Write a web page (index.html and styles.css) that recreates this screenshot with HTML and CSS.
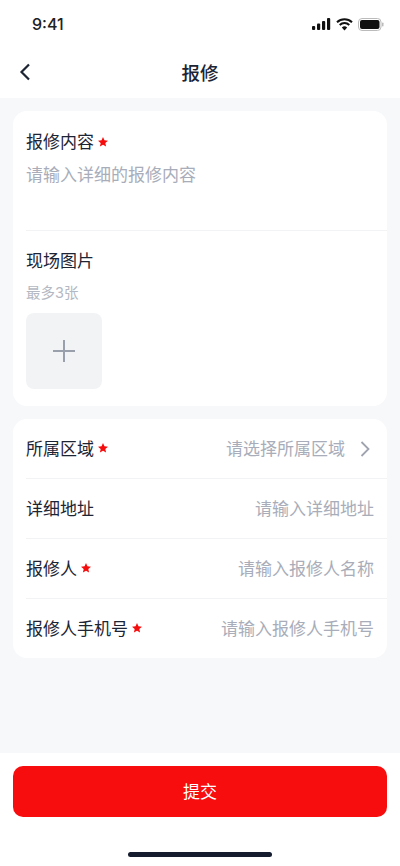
FILE: index.html
```html
<!DOCTYPE html>
<html lang="zh-CN">
<head>
    <meta charset="UTF-8">
    <meta name="viewport" content="width=device-width, initial-scale=1.0">
    <title>报修</title>
    <link rel="stylesheet" href="styles.css">
</head>
<body>
    <div class="page">
        <div class="status-bar">
            <span class="time">9:41</span>
            <div class="status-icons">
                <svg width="19" height="12" viewBox="0 0 19 12"><rect x="0" y="8" width="3.2" height="4" rx="1" /><rect x="5" y="5.6" width="3.2" height="6.4" rx="1" /><rect x="10" y="3" width="3.2" height="9" rx="1" /><rect x="15" y="0" width="3.2" height="12" rx="1" /></svg>
                <svg width="17" height="13" viewBox="0 0 17 13"><path d="M1 4.2a10.8 10.8 0 0 1 15 0" fill="none" stroke="#111" stroke-width="2" /><path d="M3.7 7a7 7 0 0 1 9.6 0" fill="none" stroke="#111" stroke-width="2" /><path d="M8.5 12.6 5.8 9.6a4 4 0 0 1 5.4 0z" /></svg>
                <svg width="26" height="13" viewBox="0 0 26 13"><rect x="0.5" y="0.5" width="22.5" height="12" rx="3.5" fill="none" stroke="#bbb" /><rect x="2" y="2" width="19.5" height="9" rx="2" /><rect x="24" y="4.5" width="1.5" height="4" rx="0.7" fill="#bbb" /></svg>
            </div>
        </div>

        <div class="nav-bar">
            <svg class="back" width="12" height="18" viewBox="0 0 12 18"><path d="M10 1.5 2.5 9l7.5 7.5" fill="none" stroke="#1d2433" stroke-width="2.2" /></svg>
            <h1 class="nav-title">报修</h1>
        </div>

        <div class="content">
            <div class="card">
                <div class="block block-text">
                    <div class="label">报修内容<svg class="star" width="10" height="10" viewBox="0 0 20 20"><path d="M10 0l2.9 6.600 7.100.7-5.400 4.800 1.600 7L10 15.400 3.800 19.100l1.600-7L0 7.300l7.100-.7z" /></svg></div>
                    <div class="placeholder textarea">请输入详细的报修内容</div>
                </div>
                <div class="block block-photo">
                    <div class="label">现场图片</div>
                    <div class="hint">最多3张</div>
                    <div class="upload">
                        <svg width="24" height="24" viewBox="0 0 24 24"><path d="M12 1v22M1 12h22" stroke="#9a9fac" stroke-width="2" /></svg>
                    </div>
                </div>
            </div>

            <div class="card">
                <div class="row">
                    <div class="label">所属区域<svg class="star" width="10" height="10" viewBox="0 0 20 20"><path d="M10 0l2.9 6.600 7.100.7-5.400 4.800 1.600 7L10 15.400 3.800 19.100l1.600-7L0 7.300l7.100-.7z" /></svg></div>
                    <div class="placeholder">请选择所属区域
                        <svg class="arrow" width="10" height="16" viewBox="0 0 10 16"><path d="M1.5 1 8.500 8l-7 7" fill="none" stroke="#9ea3af" stroke-width="1.8" /></svg>
                    </div>
                </div>
                <div class="row">
                    <div class="label">详细地址</div>
                    <div class="placeholder">请输入详细地址</div>
                </div>
                <div class="row">
                    <div class="label">报修人<svg class="star" width="10" height="10" viewBox="0 0 20 20"><path d="M10 0l2.9 6.600 7.100.7-5.400 4.800 1.600 7L10 15.400 3.800 19.100l1.600-7L0 7.300l7.100-.7z" /></svg></div>
                    <div class="placeholder">请输入报修人名称</div>
                </div>
                <div class="row">
                    <div class="label">报修人手机号<svg class="star" width="10" height="10" viewBox="0 0 20 20"><path d="M10 0l2.9 6.600 7.100.7-5.400 4.800 1.600 7L10 15.400 3.800 19.100l1.600-7L0 7.300l7.100-.7z" /></svg></div>
                    <div class="placeholder">请输入报修人手机号</div>
                </div>
            </div>
        </div>

        <div class="footer">
            <button class="submit">提交</button>
            <div class="home-bar"></div>
        </div>
    </div>
</body>
</html>
```

FILE: styles.css
```css
body {
    margin: 0;
    background: #f7f8fa;
    font-family: "Inter", "Noto Sans CJK SC", sans-serif;
    color: #1d2433;
}
.page {
    display: flex;
    flex-direction: column;
    height: 866px;
}
.status-bar {
    display: flex;
    justify-content: space-between;
    align-items: center;
    height: 48px;
    padding: 0 16px 0 32px;
    background: #fff;
}
.time {
    font-size: 16px;
    font-weight: 500;
    color: #222;
}
.status-icons {
    display: flex;
    align-items: center;
    gap: 5px;
}
.status-bar svg {
    fill: #111;
}
.nav-bar {
    display: flex;
    align-items: center;
    justify-content: center;
    position: relative;
    height: 50px;
    padding-bottom: 2px;
    box-sizing: border-box;
    background: #fff;
}
.back {
    position: absolute;
    left: 19px;
    top: 15px;
}
.nav-title {
    margin: 0;
    font-size: 18.5px;
    font-weight: 500;
}
.content {
    flex: 1;
    display: flex;
    flex-direction: column;
    gap: 13px;
    padding: 13px 13px 0;
}
.card {
    background: #fff;
    border-radius: 14px;
    padding-left: 13px;
}
.label {
    font-size: 17px;
    line-height: 24px;
    white-space: nowrap;
}
.star {
    margin-left: 4px;
    vertical-align: 1.500px;
    fill: #f50d0d;
}
.placeholder {
    display: flex;
    align-items: center;
    font-size: 17px;
    line-height: 24px;
    color: #a8adb9;
    white-space: nowrap;
}
.block-text {
    height: 120px;
    box-sizing: border-box;
    padding-top: 19px;
    border-bottom: 1px solid #f2f3f5;
}
.textarea {
    margin-top: 9px;
}
.block-photo {
    height: 175px;
    box-sizing: border-box;
    padding-top: 18px;
}
.hint {
    margin-top: 10px;
    font-size: 14.5px;
    line-height: 20px;
    color: #b4b8c2;
}
.upload {
    display: flex;
    align-items: center;
    justify-content: center;
    width: 76px;
    height: 76px;
    margin-top: 10px;
    background: #f2f3f5;
    border-radius: 8px;
}
.row {
    display: flex;
    align-items: center;
    justify-content: space-between;
    height: 60px;
    box-sizing: border-box;
    padding-right: 13px;
    border-bottom: 1px solid #f2f3f5;
}
.row:last-child {
    height: 59px;
    border-bottom: none;
}
.arrow {
    margin-left: 15px;
    margin-right: 4px;
}
.footer {
    display: flex;
    flex-direction: column;
    align-items: center;
    height: 113px;
    box-sizing: border-box;
    padding: 13px 13px 0;
    background: #fff;
}
.submit {
    width: 100%;
    height: 51px;
    padding-bottom: 3px;
    border: none;
    border-radius: 10px;
    background: #f70d0d;
    color: #fff;
    font-family: inherit;
    font-size: 17px;
}
.home-bar {
    width: 144px;
    height: 5px;
    margin-top: 35px;
    border-radius: 3px;
    background: #141c2e;
}
```
